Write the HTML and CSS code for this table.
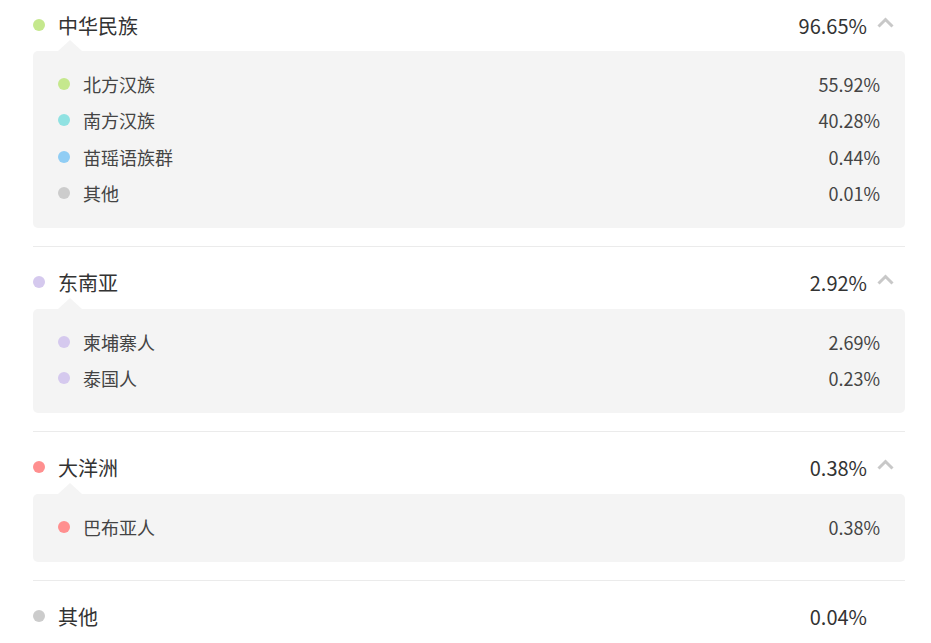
FILE: index.html
```html
<!DOCTYPE html>
<html lang="zh">
<head>
<meta charset="utf-8">
<link rel="stylesheet" href="styles.css">
</head>
<body>
<div class="list">
  <section class="group">
    <div class="head">
      <span class="dot c-green"></span>
      <span class="name">中华民族</span>
      <span class="pct">96.65%</span>
      <span class="chev"><svg width="17" height="11" viewBox="0 0 17 11"><path d="M1.5 9.5 L8.5 2.5 L15.5 9.5" fill="none" stroke="#c8c8c8" stroke-width="3"/></svg></span>
    </div>
    <div class="panel">
      <div class="row"><span class="dot c-green"></span><span class="name">北方汉族</span><span class="pct">55.92%</span></div>
      <div class="row"><span class="dot c-cyan"></span><span class="name">南方汉族</span><span class="pct">40.28%</span></div>
      <div class="row"><span class="dot c-blue"></span><span class="name">苗瑶语族群</span><span class="pct">0.44%</span></div>
      <div class="row"><span class="dot c-gray"></span><span class="name">其他</span><span class="pct">0.01%</span></div>
    </div>
  </section>
  <section class="group">
    <div class="head">
      <span class="dot c-purple"></span>
      <span class="name">东南亚</span>
      <span class="pct">2.92%</span>
      <span class="chev"><svg width="17" height="11" viewBox="0 0 17 11"><path d="M1.5 9.5 L8.5 2.5 L15.5 9.5" fill="none" stroke="#c8c8c8" stroke-width="3"/></svg></span>
    </div>
    <div class="panel">
      <div class="row"><span class="dot c-purple"></span><span class="name">柬埔寨人</span><span class="pct">2.69%</span></div>
      <div class="row"><span class="dot c-purple"></span><span class="name">泰国人</span><span class="pct">0.23%</span></div>
    </div>
  </section>
  <section class="group">
    <div class="head">
      <span class="dot c-red"></span>
      <span class="name">大洋洲</span>
      <span class="pct">0.38%</span>
      <span class="chev"><svg width="17" height="11" viewBox="0 0 17 11"><path d="M1.5 9.5 L8.5 2.5 L15.5 9.5" fill="none" stroke="#c8c8c8" stroke-width="3"/></svg></span>
    </div>
    <div class="panel">
      <div class="row"><span class="dot c-red"></span><span class="name">巴布亚人</span><span class="pct">0.38%</span></div>
    </div>
  </section>
  <section class="group last">
    <div class="head">
      <span class="dot c-gray"></span>
      <span class="name">其他</span>
      <span class="pct">0.04%</span>
      <span class="chev"></span>
    </div>
  </section>
</div>
</body>
</html>
```

FILE: styles.css
```css
* { box-sizing: border-box; }
html, body {
  margin: 0;
  padding: 0;
  background: #ffffff;
}
body {
  font-family: "Noto Sans CJK SC", "Noto Sans", sans-serif;
  color: #333333;
  overflow: hidden;
}
.list {
  margin: 0 26px 0 33px;
}
.group {
  padding: 10px 0 18px;
  border-bottom: 1px solid #ebebeb;
}
.group:first-child {
  padding-top: 0;
}
.group.last {
  border-bottom: none;
}
.head {
  height: 50px;
  display: flex;
  align-items: center;
  font-size: 20px;
}
.head .dot {
  margin-right: 13px;
}
.head .name {
  flex: 1;
  color: #333;
}
.head .pct {
  color: #333;
}
.chev {
  width: 17px;
  height: 11px;
  margin-left: 10px;
  margin-right: 11px;
  margin-top: -5px;
  display: flex;
}
.dot {
  width: 12px;
  height: 12px;
  border-radius: 50%;
  flex: none;
}
.c-green { background: #c5e88d; }
.c-cyan { background: #90e2e2; }
.c-blue { background: #90cdf4; }
.c-gray { background: #cccccc; }
.c-purple { background: #d5c9ee; }
.c-red { background: #ff8f8f; }

.panel {
  position: relative;
  margin-top: 1px;
  background: #f4f4f4;
  border-radius: 5px;
  padding: 15px 25px 17px 25px;
}
.group + .group .panel {
  margin-top: 1.5px;
}
.panel::before {
  content: "";
  position: absolute;
  left: 25px;
  top: -11px;
  border-left: 12px solid transparent;
  border-right: 12px solid transparent;
  border-bottom: 11px solid #f4f4f4;
}
.row {
  height: 36.33px;
  display: flex;
  align-items: center;
  font-size: 18px;
  color: #444;
}
.row .dot {
  margin-right: 13px;
}
.row .name {
  flex: 1;
}
```
